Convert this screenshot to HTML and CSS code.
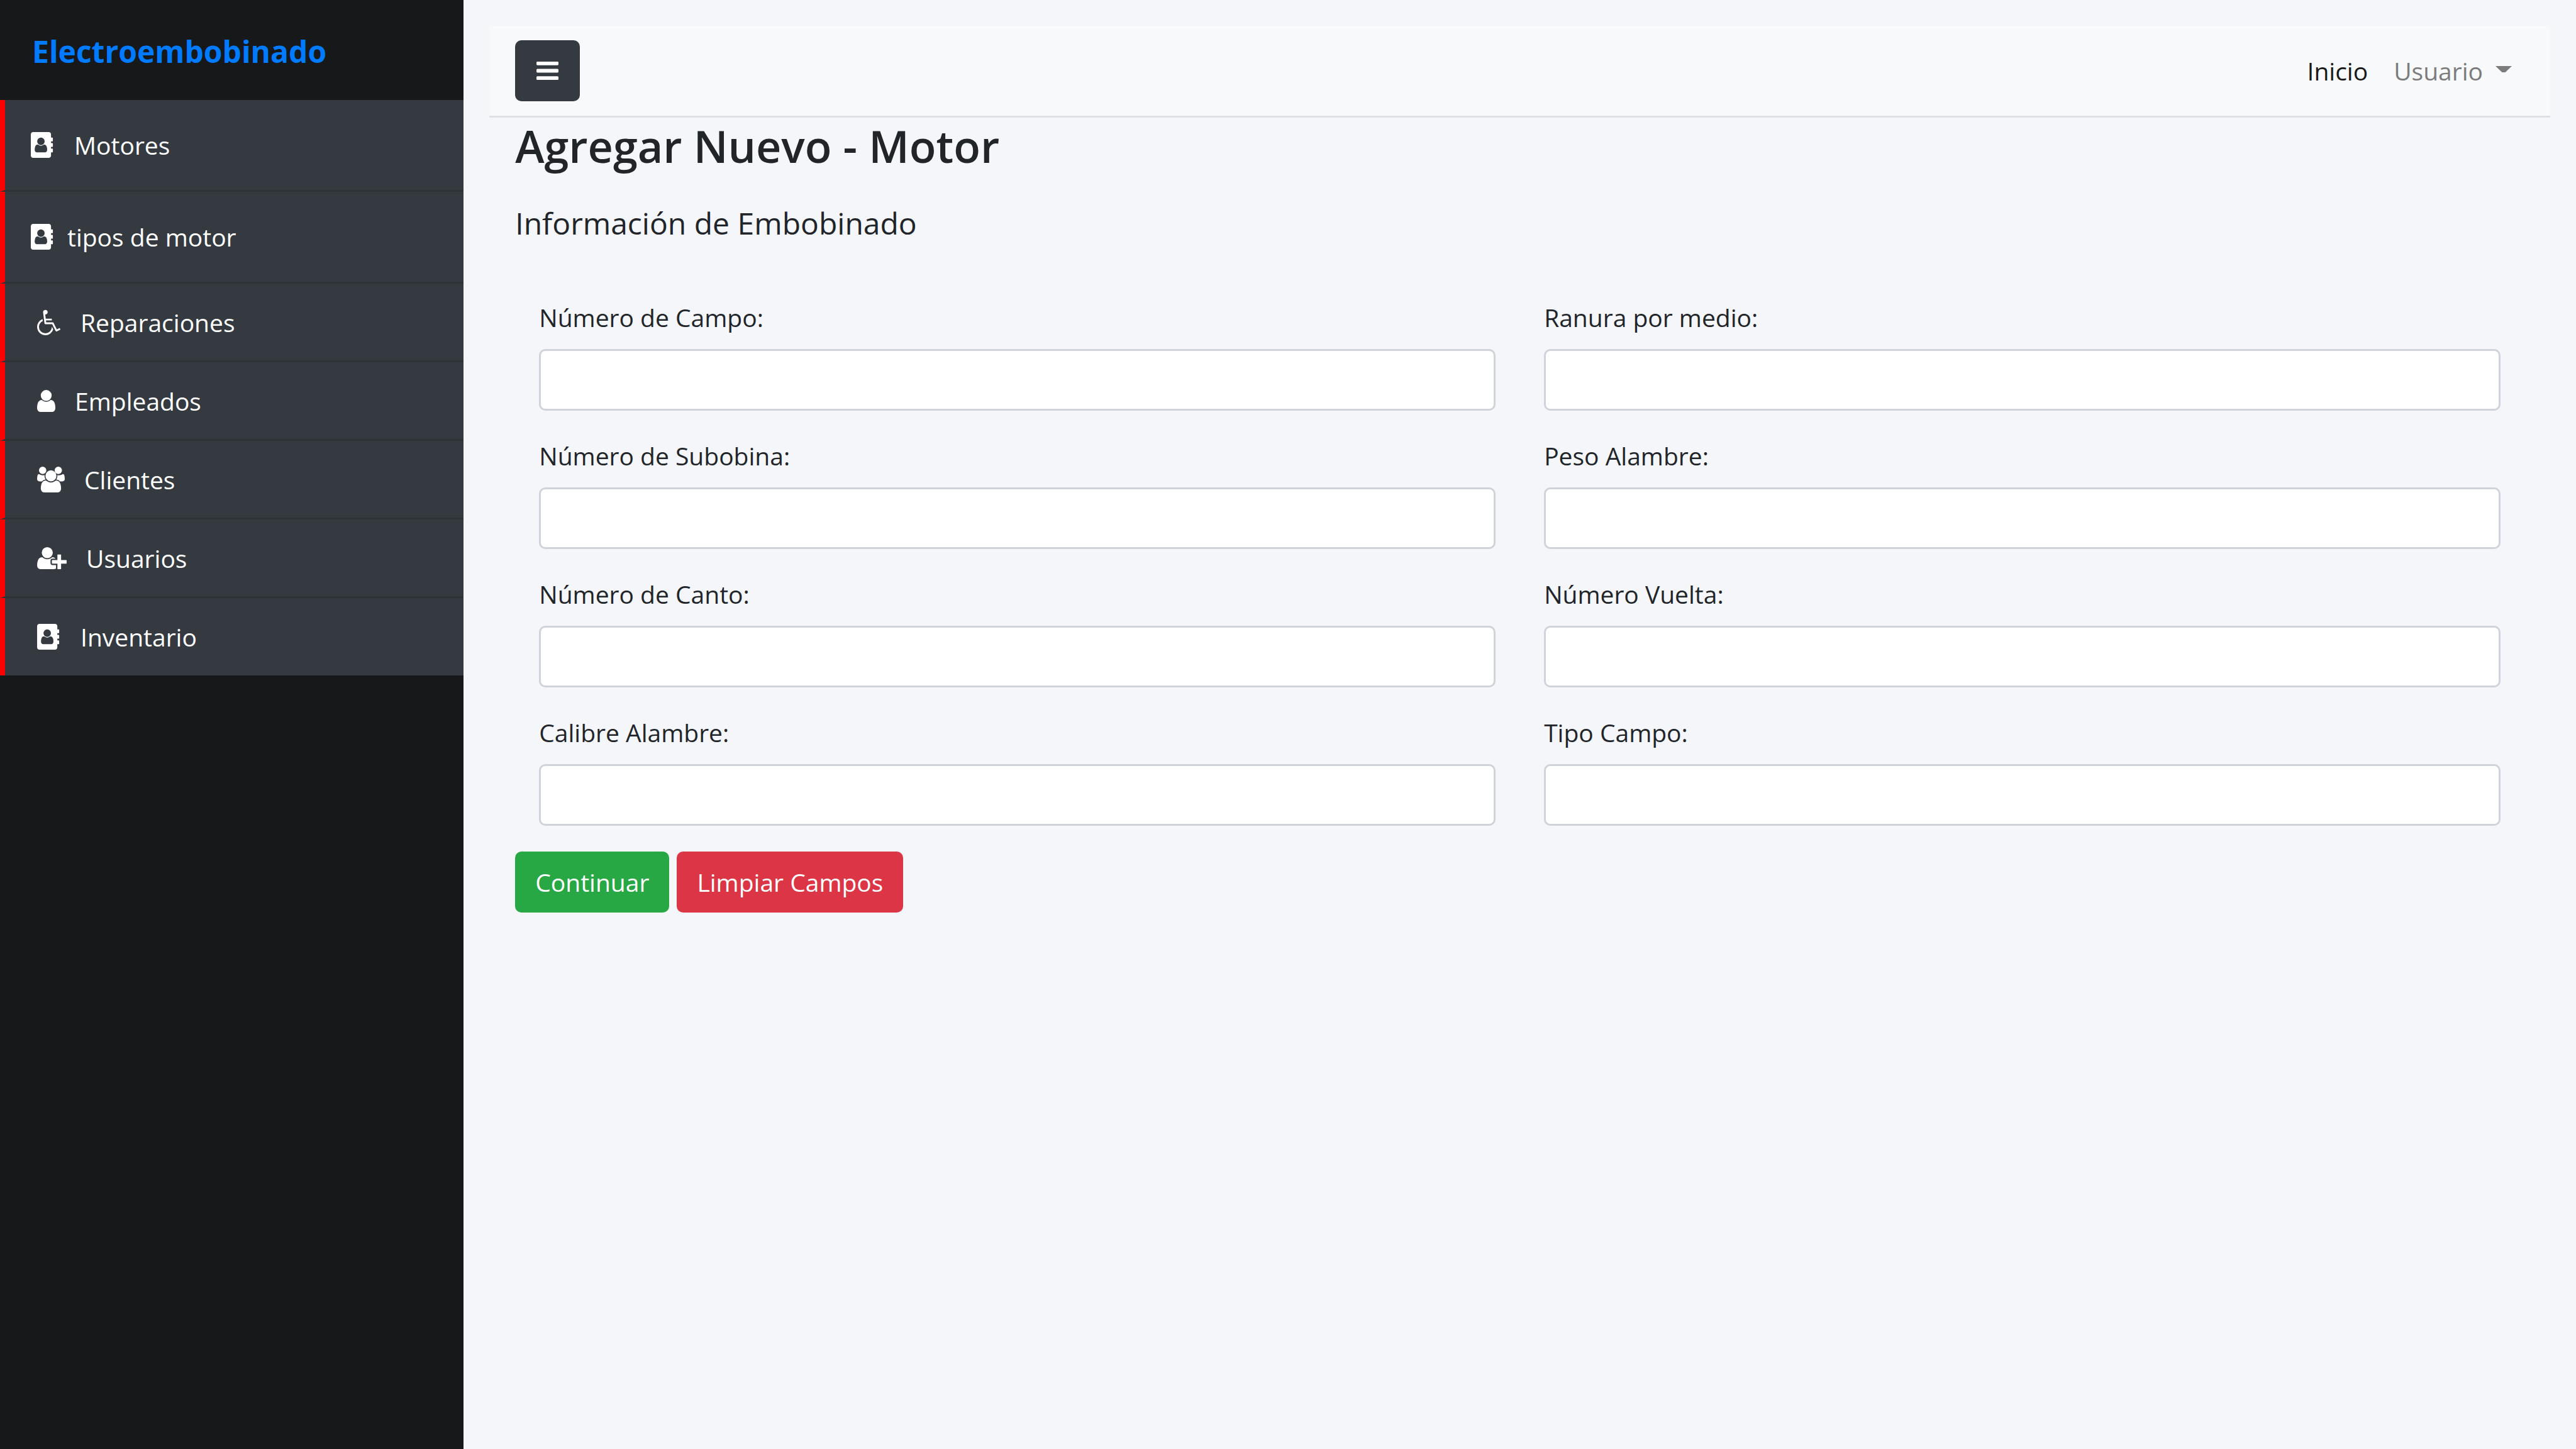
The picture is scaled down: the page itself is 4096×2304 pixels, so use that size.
FILE: index.html
```html
<!DOCTYPE html>
<html lang="es">
<head>
<meta charset="utf-8">
<meta name="viewport" content="width=device-width, initial-scale=1">
<title>Electroembobinado</title>
<link rel="stylesheet" href="styles.css">
</head>
<body>
<svg class="sprite" aria-hidden="true">
  <symbol id="book" viewBox="0 0 1664 1792"><path fill-rule="evenodd" d="M160 0h1088q66 0 113 47t47 113v224h96q13 0 22.500 9.500t9.500 22.500v192q0 13-9.500 22.500t-22.500 9.500h-96v128h96q13 0 22.500 9.500t9.500 22.500v192q0 13-9.500 22.500t-22.500 9.500h-96v128h96q13 0 22.500 9.500t9.500 22.500v192q0 13-9.500 22.500t-22.500 9.500h-96v224q0 66-47 113t-113 47h-1088q-66 0-113-47t-47-113v-1472q0-66 47-113t113-47zM964 644q0 107-76.500 183t-183.500 76-183.500-76-76.500-183q0-108 76.500-184t183.500-76 183.500 76 76.500 184zm-48 220q46 0 82.500 17t60 47.500 39.500 67 24 81 11.500 82.500 3.500 79q0 67-39.500 118.500t-105.500 51.500h-576q-66 0-105.500-51.500t-39.500-118.500q0-48 4.500-93.500t18.500-98.500 36.500-91.500 63-64.500 93.500-26h5q7 4 32 19.500t35.500 21 33 17 37 16 35 9 39.500 4.500 39.500-4.500 35-9 37-16 33-17 35.500-21 32-19.500z"/></symbol>
  <symbol id="wheelchair" viewBox="0 0 1664 1792"><path d="M1023 1187l102 204q-58 179-210 290t-339 111q-156 0-288.500-77.500t-210-210-77.500-288.500q0-181 104.500-330t274.500-211l17 131q-122 54-195 165.500t-73 244.500q0 185 131.500 316.500t316.500 131.500q126 0 232.500-65t165-175.500 49.500-236.500zM1571 1287l58 114-256 128q-13 7-29 7-40 0-57-35l-239-477h-472q-24 0-42.500-16.500t-21.500-40.500l-96-779q-2-16 6-42 14-51 57-82.500t97-31.500q66 0 113 47t47 113q0 69-52 117.500t-120 41.500l37 289h423v128h-407l16 128h455q40 0 57 35l228 455z"/></symbol>
  <symbol id="user" viewBox="256 0 1280 1792"><path d="M1536 1399q0 109-62.500 187t-150.500 78h-854q-88 0-150.500-78t-62.500-187q0-85 8.500-160.500t31.500-152 58.500-131 94-89 134.500-34.500q131 128 313 128t313-128q76 0 134.500 34.500t94 89 58.500 131 31.500 152 8.500 160.500zm-256-887q0 159-112.500 271.500t-271.500 112.500-271.500-112.500-112.500-271.500 112.500-271.500 271.500-112.500 271.500 112.500 112.500 271.500z"/></symbol>
  <symbol id="users" viewBox="64 0 1920 1792"><path d="M657 896q-162 5-265 128h-134q-82 0-138-40.500t-56-118.500q0-353 124-353 6 0 43.500 21t97.500 42.500 119 21.500q67 0 133-23-5 37-5 66 0 139 81 256zm1071 637q0 120-73 189.500t-194 69.500h-874q-121 0-194-69.500t-73-189.500q0-53 3.500-103.500t14-109 26.500-108.500 43-97.500 62-81 85.500-53.500 111.500-20q10 0 43 21.500t73 48 107 48 135 21.500 135-21.500 107-48 73-48 43-21.500q61 0 111.500 20t85.500 53.500 62 81 43 97.500 26.500 108.500 14 109 3.500 103.500zm-1024-1277q0 106-75 181t-181 75-181-75-75-181 75-181 181-75 181 75 75 181zm704 384q0 159-112.500 271.500t-271.500 112.500-271.500-112.500-112.500-271.500 112.500-271.500 271.500-112.500 271.500 112.500 112.500 271.500zm576 225q0 78-56 118.500t-138 40.500h-134q-103-123-265-128 81-117 81-256 0-29-5-66 66 23 133 23 59 0 119-21.500t97.500-42.500 43.500-21q124 0 124 353zm-192-609q0 106-75 181t-181 75-181-75-75-181 75-181 181-75 181 75 75 181z"/></symbol>
  <symbol id="user-plus" viewBox="0 0 2048 1792"><path d="M704 896q-159 0-271.500-112.500t-112.500-271.500 112.500-271.500 271.500-112.500 271.500 112.500 112.500 271.500-112.500 271.500-271.500 112.500zm960 128h352q13 0 22.500 9.500t9.500 22.500v192q0 13-9.500 22.500t-22.500 9.500h-352v352q0 13-9.500 22.500t-22.500 9.500h-192q-13 0-22.500-9.500t-9.500-22.500v-352h-352q-13 0-22.500-9.500t-9.500-22.500v-192q0-13 9.500-22.500t22.500-9.500h352v-352q0-13 9.500-22.500t22.500-9.500h192q13 0 22.500 9.500t9.500 22.500v352zm-736 224q0 52 38 90t90 38h256v238q-68 50-171 50h-874q-121 0-194-69t-73-190q0-53 3.500-103.500t14-109 26.500-108.500 43-97.500 62-81 85.500-53.500 111.500-20q19 0 39 17 79 61 154.500 91.500t164.500 30.500 164.500-30.500 154.500-91.500q20-17 39-17 132 0 217 96h-223q-52 0-90 38t-38 90v192z"/></symbol>
  <symbol id="bars" viewBox="128 0 1536 1792"><path d="M1664 1344v128q0 26-19 45t-45 19h-1408q-26 0-45-19t-19-45v-128q0-26 19-45t45-19h1408q26 0 45 19t19 45zm0-512v128q0 26-19 45t-45 19h-1408q-26 0-45-19t-19-45v-128q0-26 19-45t45-19h1408q26 0 45 19t19 45zm0-512v128q0 26-19 45t-45 19h-1408q-26 0-45-19t-19-45v-128q0-26 19-45t45-19h1408q26 0 45 19t19 45z"/></symbol>
</svg>
<div class="wrapper">
  <aside class="sidebar">
    <a class="brand" href="#">Electroembobinado</a>
    <nav class="menu">
      <a class="menu-item tall" href="#"><svg class="icon w38"><use href="#book"/></svg>Motores</a>
      <a class="menu-item tall close" href="#"><svg class="icon w38"><use href="#book"/></svg>tipos de motor</a>
      <a class="menu-item" href="#"><svg class="icon w38"><use href="#wheelchair"/></svg>Reparaciones</a>
      <a class="menu-item" href="#"><svg class="icon w29"><use href="#user"/></svg>Empleados</a>
      <a class="menu-item" href="#"><svg class="icon w44"><use href="#users"/></svg>Clientes</a>
      <a class="menu-item" href="#"><svg class="icon w47"><use href="#user-plus"/></svg>Usuarios</a>
      <a class="menu-item" href="#"><svg class="icon w38"><use href="#book"/></svg>Inventario</a>
    </nav>
  </aside>
  <div class="page">
    <header class="navbar">
      <button class="btn btn-dark" type="button" aria-label="Menú"><svg class="icon w35"><use href="#bars"/></svg></button>
      <nav class="links">
        <a class="link active" href="#">Inicio</a>
        <a class="link" href="#">Usuario<span class="caret"></span></a>
      </nav>
    </header>
    <main class="content">
      <h1 class="title">Agregar Nuevo - Motor</h1>
      <h2 class="subtitle">Información de Embobinado</h2>
      <form>
        <div class="fields">
          <div class="field"><label for="campo">Número de Campo:</label><input id="campo" type="text"></div>
          <div class="field"><label for="ranura">Ranura por medio:</label><input id="ranura" type="text"></div>
          <div class="field"><label for="subobina">Número de Subobina:</label><input id="subobina" type="text"></div>
          <div class="field"><label for="peso">Peso Alambre:</label><input id="peso" type="text"></div>
          <div class="field"><label for="canto">Número de Canto:</label><input id="canto" type="text"></div>
          <div class="field"><label for="vuelta">Número Vuelta:</label><input id="vuelta" type="text"></div>
          <div class="field"><label for="calibre">Calibre Alambre:</label><input id="calibre" type="text"></div>
          <div class="field"><label for="tipo">Tipo Campo:</label><input id="tipo" type="text"></div>
        </div>
        <div class="actions">
          <button class="btn btn-success" type="submit">Continuar</button>
          <button class="btn btn-danger" type="reset">Limpiar Campos</button>
        </div>
      </form>
    </main>
  </div>
</div>
</body>
</html>
```

FILE: styles.css
```css
* { box-sizing: border-box; }

body {
  margin: 0;
  background: #f4f6fa;
  color: #212529;
  font-family: "Open Sans", "Noto Sans", sans-serif;
  font-size: 39px;
  line-height: 61px;
}

a { text-decoration: none; }

.sprite { position: absolute; width: 0; height: 0; }

.icon { height: 41px; fill: currentColor; flex: none; }
.w29 { width: 29px; }
.w35 { width: 35px; }
.w38 { width: 38px; }
.w44 { width: 44px; }
.w47 { width: 47px; }

.wrapper { display: flex; min-height: 100vh; }

.sidebar { width: 18%; flex: none; background: #161819; }

.brand {
  display: flex;
  align-items: center;
  height: 159px;
  padding: 3px 51px 0;
  color: #007bff;
  font-size: 48px;
  font-weight: 700;
}

.menu-item {
  display: flex;
  align-items: center;
  gap: 31px;
  padding: 31px 51px 30px;
  border-left: 8px solid #f00;
  border-bottom: 3px solid #2e3338;
  background: #343a40;
  color: #fff;
}
.menu-item.tall { padding: 41px; }
.menu-item.close { gap: 20px; }
.menu-item:last-child { padding-bottom: 31px; border-bottom: 0; }

.page { flex: 1; min-width: 0; padding: 41px; }

.navbar {
  display: flex;
  align-items: center;
  justify-content: space-between;
  padding: 23px 61px 23px 41px;
  border-bottom: 3px solid #dee0e6;
  background: #f8f9fb;
}

.links { display: flex; gap: 41px; }
.link { color: #7c7c7d; }
.link.active { color: #19191a; }

.caret {
  display: inline-block;
  width: 26px;
  height: 10px;
  margin-left: 20px;
  vertical-align: 13px;
  background: currentColor;
  clip-path: polygon(0 0, 100% 0, 60% 100%, 40% 100%);
}

.btn {
  display: flex;
  align-items: center;
  justify-content: center;
  height: 97px;
  padding: 0 32px;
  border: 0;
  border-radius: 10px;
  color: #fff;
  font: inherit;
}
.btn-dark { padding: 0 34px; background: #343a40; }
.btn-success { background: #28a745; }
.btn-danger { background: #dc3545; }

.content { padding: 0 41px; }

.title {
  margin: 0 0 40px;
  font-size: 70px;
  font-weight: 600;
  line-height: 90px;
}

.subtitle {
  margin: 0 0 81px;
  font-size: 48px;
  font-weight: 400;
  line-height: 76px;
}

.fields {
  display: grid;
  grid-template-columns: 1fr 1fr;
  gap: 41px 77px;
  padding: 0 38px;
}

.field { display: flex; flex-direction: column; gap: 20px; }

.field input {
  width: 100%;
  height: 98px;
  padding: 0 31px;
  border: 3px solid #ced4da;
  border-radius: 10px;
  background: #fff;
  font: inherit;
}

.actions { display: flex; gap: 12px; padding-top: 41px; }
```
